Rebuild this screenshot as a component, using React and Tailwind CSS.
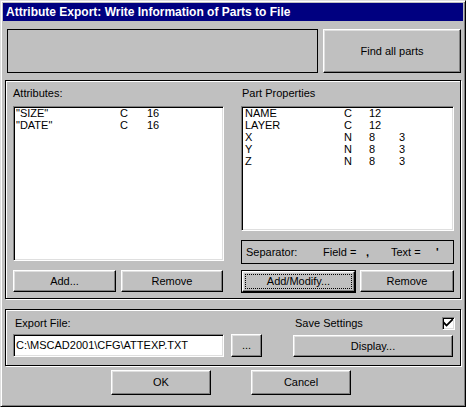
import React from 'react';

const bevel =
  'flex items-center justify-center bg-[#c0c0c0] border border-t-white border-l-white border-r-black border-b-black shadow-[inset_-1px_-1px_0_#808080,inset_1px_1px_0_#dfdfdf] text-black';
const sunken =
  'bg-white border border-t-[#808080] border-l-[#808080] border-r-white border-b-white shadow-[inset_1px_1px_0_#000,inset_-1px_-1px_0_#dfdfdf]';
const group =
  'border border-black shadow-[inset_1px_1px_0_#fff,1px_1px_0_#fff]';

const attributes = [
  ['"SIZE"', 'C', '16'],
  ['"DATE"', 'C', '16'],
];

const properties = [
  ['NAME', 'C', '12', ''],
  ['LAYER', 'C', '12', ''],
  ['X', 'N', '8', '3'],
  ['Y', 'N', '8', '3'],
  ['Z', 'N', '8', '3'],
];

function Button({ className = '', children }) {
  return <div className={`${bevel} ${className}`}>{children}</div>;
}

function App() {
  return (
    <div className="w-[466px] h-[407px] bg-[#c0c0c0] border border-t-[#dfdfdf] border-l-[#dfdfdf] border-r-black border-b-black shadow-[inset_1px_1px_0_#fff,inset_-1px_-1px_0_#808080] p-[2px] flex flex-col font-['Liberation_Sans',Arial,sans-serif] text-[11px] leading-[13px] text-black select-none">
      {/* title bar */}
      <div className="h-[18px] bg-[#000080] text-white font-bold text-[12px] pl-[3px] flex items-center">
        Attribute Export: Write Information of Parts to File
      </div>

      {/* top row */}
      <div className="mt-[8px] h-[44px] flex">
        <div className="ml-[4px] w-[311px] border border-black" />
        <Button className="ml-[5px] w-[138px]">Find all parts</Button>
      </div>

      {/* main group */}
      <div className={`mt-[7px] mx-[2px] h-[219px] ${group} flex pt-[6px] pl-[7px]`}>
        <div className="w-[211px] flex flex-col">
          <div className="h-[13px]">Attributes:</div>
          <div className={`mt-[6px] h-[155px] ${sunken} pl-[2px] leading-[12px]`}>
            {attributes.map((row) => (
              <div key={row[0]} className="flex">
                <span className="w-[104px]">{row[0]}</span>
                <span className="w-[27px]">{row[1]}</span>
                <span>{row[2]}</span>
              </div>
            ))}
          </div>
          <div className="mt-[9px] flex">
            <Button className="w-[103px] h-[22px]">Add...</Button>
            <Button className="ml-[5px] w-[102px] h-[22px]">Remove</Button>
          </div>
        </div>

        <div className="ml-[17px] w-[213px] flex flex-col">
          <div className="h-[13px] pl-[1px]">Part Properties</div>
          <div className={`mt-[6px] h-[125px] ${sunken} pl-[3px] leading-[12px]`}>
            {properties.map((row) => (
              <div key={row[0]} className="flex">
                <span className="w-[99px]">{row[0]}</span>
                <span className="w-[25px]">{row[1]}</span>
                <span className="w-[30px]">{row[2]}</span>
                <span>{row[3]}</span>
              </div>
            ))}
          </div>
          <div className="mt-[9px] h-[24px] border border-black flex items-center pl-[4px]">
            <span className="w-[77px]">Separator:</span>
            <span className="w-[43px]">Field =</span>
            <span className="w-[25px] font-bold">,</span>
            <span className="w-[45px]">Text =</span>
            <span className="font-bold">'</span>
          </div>
          <div className="mt-[6px] flex">
            <div className="w-[115px] h-[23px] border border-black flex">
              <div className={`${bevel} flex-1 p-[2px]`}>
                <span className="flex-1 self-stretch flex items-center justify-center border border-dotted border-black">
                  Add/Modify...
                </span>
              </div>
            </div>
            <Button className="ml-[4px] w-[94px] h-[22px]">Remove</Button>
          </div>
        </div>
      </div>

      {/* export group */}
      <div className={`mt-[10px] mx-[2px] h-[57px] ${group} flex flex-col pl-[7px] pt-[7px]`}>
        <div className="flex h-[13px]">
          <span className="ml-[2px] w-[280px]">Export File:</span>
          <span>Save Settings</span>
          <span className={`ml-[79px] w-[13px] h-[13px] ${sunken} flex items-center justify-center`}>
            <svg width="9" height="9" viewBox="0 0 7 7">
              <path d="M0 2 L0 4 L2 6 L7 1 L7 -1 L2 4 Z" fill="#000" />
            </svg>
          </span>
        </div>
        <div className="mt-[4px] flex">
          <div className={`w-[211px] h-[23px] ${sunken} flex items-center pl-[2px]`}>
            C:\MSCAD2001\CFG\ATTEXP.TXT
          </div>
          <Button className="ml-[7px] w-[31px] h-[23px]">...</Button>
          <Button className="ml-[31px] w-[160px] h-[22px] mt-[1px]">Display...</Button>
        </div>
      </div>

      {/* dialog buttons */}
      <div className="mt-[4px] flex">
        <Button className="ml-[108px] w-[100px] h-[25px]">OK</Button>
        <Button className="ml-[40px] w-[100px] h-[25px]">Cancel</Button>
      </div>
    </div>
  );
}

export default App;
